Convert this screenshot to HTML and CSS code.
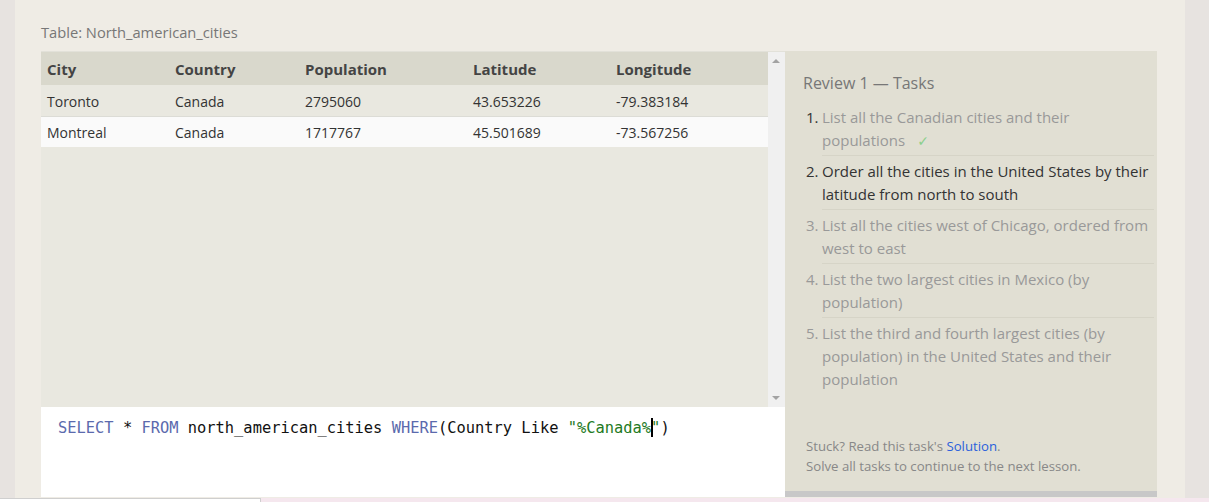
FILE: index.html
```html
<!DOCTYPE html>
<html>
<head>
<meta charset="utf-8">
<link rel="stylesheet" href="styles.css">
</head>
<body>
<div class="page">
  <div class="main">
    <div class="table-title">Table: North_american_cities</div>
    <div class="workspace">
      <div class="left">
        <div class="results">
          <div class="table-wrap">
            <table class="data">
              <thead>
                <tr><th class="c1">City</th><th class="c2">Country</th><th class="c3">Population</th><th class="c4">Latitude</th><th class="c5">Longitude</th></tr>
              </thead>
              <tbody>
                <tr class="odd"><td>Toronto</td><td>Canada</td><td>2795060</td><td>43.653226</td><td>-79.383184</td></tr>
                <tr class="even"><td>Montreal</td><td>Canada</td><td>1717767</td><td>45.501689</td><td>-73.567256</td></tr>
              </tbody>
            </table>
          </div>
          <div class="scrollbar">
            <span class="arrow up"></span>
            <span class="arrow down"></span>
          </div>
        </div>
        <div class="editor"><span class="kw">SELECT</span> * <span class="kw">FROM</span> north_american_cities <span class="kw">WHERE</span>(Country Like <span class="str">"%Canada%<span class="cursor"></span>"</span>)</div>
      </div>
      <div class="right">
        <div class="tasks">
          <h3 class="tasks-title">Review 1 — Tasks</h3>
          <ol class="task-list">
            <li class="done"><span class="num">1.</span><span class="txt"><span>List all the Canadian cities and their</span> <span>populations</span><span class="check">✓</span></span></li>
            <li class="current"><span class="num">2.</span><span class="txt">Order all the cities in the United States by their latitude from north to south</span></li>
            <li class="todo"><span class="num">3.</span><span class="txt">List all the cities west of Chicago, ordered from west to east</span></li>
            <li class="todo"><span class="num">4.</span><span class="txt">List the two largest cities in Mexico (by population)</span></li>
            <li class="todo last"><span class="num">5.</span><span class="txt">List the third and fourth largest cities (by population) in the United States and their population</span></li>
          </ol>
          <div class="stuck">
            <div>Stuck? Read this task's <a class="link">Solution</a>.</div>
            <div>Solve all tasks to continue to the next lesson.</div>
          </div>
        </div>
        <div class="right-bar"></div>
      </div>
    </div>
  </div>
  <div class="side"></div>
</div>
<div class="bottom-strip"><div class="bottom-box"></div></div>
</body>
</html>
```

FILE: styles.css
```css
html, body {
  margin: 0;
  padding: 0;
}
body {
  background: #e7e3e0;
  font-family: "Open Sans", "Noto Sans", sans-serif;
  width: 1209px;
  height: 502px;
  overflow: hidden;
}
.page {
  display: flex;
  height: 498px;
}
.main {
  margin-left: 15px;
  width: 1170px;
  background: #efece5;
  padding: 0 28px 0 26px;
  box-sizing: border-box;
}
.side {
  flex: 1;
}
.table-title {
  font-size: 14.7px;
  color: #777;
  height: 51px;
  line-height: 20px;
  padding-top: 22px;
  box-sizing: border-box;
}
.workspace {
  display: flex;
  height: 446px;
}
.left {
  width: 744px;
  display: flex;
  flex-direction: column;
}
.results {
  height: 356px;
  display: flex;
  background: #e9e8e0;
  border-top: 1px solid #e2e1d9;
  box-sizing: border-box;
}
.table-wrap {
  width: 727px;
}
.data {
  width: 727px;
  border-collapse: collapse;
  table-layout: fixed;
}
.data th {
  background: #d9d8cc;
  text-align: left;
  font-size: 15px;
  font-weight: 700;
  color: #444;
  height: 33px;
  padding: 0 0 0 6px;
}
.c1 { width: 122px; }
.c2 { width: 124px; }
.c3 { width: 162px; }
.c4 { width: 137px; }
.data td {
  font-size: 14px;
  color: #333;
  height: 31px;
  padding: 2px 0 0 6px;
  box-sizing: border-box;
}
.data tr.even td {
  background: #fafafa;
  border-top: 1px solid #dcdcd6;
}
.scrollbar {
  width: 17px;
  background: #f0f0f0;
  position: relative;
}
.arrow {
  position: absolute;
  left: 4px;
  width: 0;
  height: 0;
  border-left: 4px solid transparent;
  border-right: 4px solid transparent;
}
.arrow.up {
  top: 7px;
  border-bottom: 4px solid #a3a3a3;
}
.arrow.down {
  bottom: 7px;
  border-top: 4px solid #a3a3a3;
}
.editor {
  height: 90px;
  background: #fff;
  padding: 11px 0 0 17px;
  box-sizing: border-box;
  font-family: "DejaVu Sans Mono", "Liberation Mono", monospace;
  font-size: 15.4px;
  line-height: 20px;
  color: #111;
  white-space: pre;
}
.kw { color: #5b6aad; }
.str { color: #237a23; }
.cursor {
  display: inline-block;
  width: 2px;
  height: 19px;
  background: #000;
  vertical-align: -4px;
  margin-right: -2px;
}
.right {
  width: 372px;
  display: flex;
  flex-direction: column;
}
.tasks {
  flex: 1;
  background: #e1dfd3;
  display: flex;
  flex-direction: column;
  padding: 21px 3px 15px 18px;
}
.tasks-title {
  margin: 0;
  font-size: 16px;
  font-weight: 400;
  color: #777;
  line-height: 22px;
}
.task-list {
  list-style: none;
  margin: 8px 0 0;
  padding: 0;
}
.task-list li {
  display: flex;
  font-size: 15px;
  line-height: 23px;
}
.num {
  width: 16px;
  margin-left: 3px;
  text-align: left;
  flex: none;
  padding-top: 4px;
}
.txt {
  flex: 1;
  padding: 4px 4px 3px 0;
  border-bottom: 1px solid #d6d4c7;
}
.last .txt { border-bottom: none; }
.done .num { color: #333; }
.done .txt { color: #999; }
.current { color: #333; }
.todo { color: #999; }
.check {
  color: #8ccf8c;
  margin-left: 12px;
  font-family: "DejaVu Sans", sans-serif;
  font-size: 14px;
  line-height: 0;
}
.stuck {
  margin-top: auto;
  font-size: 13.2px;
  line-height: 20px;
  color: #888;
  padding-left: 3px;
}
.link { color: #2a5fdc; }
.right-bar {
  height: 6px;
  background: #c8c8c8;
}
.bottom-strip {
  height: 4px;
  background: #f5e7ee;
}
.bottom-box {
  width: 261px;
  height: 4px;
  background: #fff;
  border-top: 1px solid #cfcfcf;
  border-right: 1px solid #cfcfcf;
  box-sizing: border-box;
}
```
